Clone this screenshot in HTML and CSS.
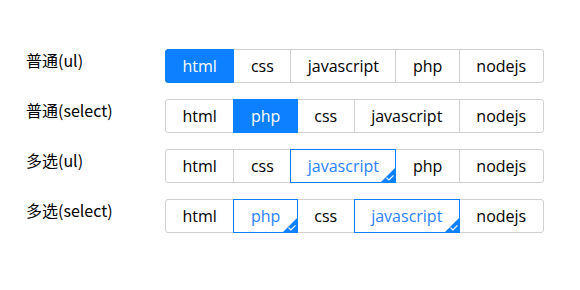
FILE: index.html
```html
<!DOCTYPE html>
<html>
<head>
<meta charset="utf-8">
<link rel="stylesheet" href="styles.css">
</head>
<body>
<div class="page">
  <div class="row">
    <div class="label">普通(ul)</div>
    <ul class="seg">
      <li class="item on">html</li>
      <li class="item">css</li>
      <li class="item">javascript</li>
      <li class="item">php</li>
      <li class="item">nodejs</li>
    </ul>
  </div>
  <div class="row">
    <div class="label">普通(select)</div>
    <ul class="seg">
      <li class="item">html</li>
      <li class="item on">php</li>
      <li class="item">css</li>
      <li class="item">javascript</li>
      <li class="item">nodejs</li>
    </ul>
  </div>
  <div class="row">
    <div class="label">多选(ul)</div>
    <ul class="seg">
      <li class="item">html</li>
      <li class="item">css</li>
      <li class="item check">javascript<svg class="tick" viewBox="0 0 14 14"><path d="M14 0V14H0Z" fill="#0c80ff"/><path d="M5.5 9.6l2.4 2.3 4.6-4.6" stroke="#fff" stroke-width="1.2" fill="none"/></svg></li>
      <li class="item">php</li>
      <li class="item">nodejs</li>
    </ul>
  </div>
  <div class="row">
    <div class="label">多选(select)</div>
    <ul class="seg">
      <li class="item">html</li>
      <li class="item check">php<svg class="tick" viewBox="0 0 14 14"><path d="M14 0V14H0Z" fill="#0c80ff"/><path d="M5.5 9.6l2.4 2.3 4.6-4.6" stroke="#fff" stroke-width="1.2" fill="none"/></svg></li>
      <li class="item">css</li>
      <li class="item check">javascript<svg class="tick" viewBox="0 0 14 14"><path d="M14 0V14H0Z" fill="#0c80ff"/><path d="M5.5 9.6l2.4 2.3 4.6-4.6" stroke="#fff" stroke-width="1.2" fill="none"/></svg></li>
      <li class="item">nodejs</li>
    </ul>
  </div>
</div>
</body>
</html>
```
FILE: styles.css
```css
html, body {
  margin: 0;
  padding: 0;
  background: #fff;
}
.page {
  padding: 49px 0 0 26px;
  display: flex;
  flex-direction: column;
  gap: 16px;
  font-family: "Open Sans", "Noto Sans CJK SC", sans-serif;
  color: #000;
}
.row {
  display: flex;
  align-items: flex-start;
}
.label {
  width: 139px;
  font-size: 16px;
  line-height: 22px;
  padding-top: 0;
  font-family: "Noto Sans CJK SC", sans-serif;
  color: #000;
}
.seg {
  list-style: none;
  margin: 0;
  padding: 0;
  display: flex;
}
.item {
  position: relative;
  height: 32px;
  line-height: 32px;
  padding: 0 16.5px;
  border: 1px solid #d0d0d0;
  margin-left: -1px;
  font-size: 16px;
  background: #fff;
  color: #000;
  white-space: nowrap;
}
.item:first-child {
  margin-left: 0;
  border-radius: 3px 0 0 3px;
}
.item:last-child {
  border-radius: 0 3px 3px 0;
}
.item.on {
  background: #0c80ff;
  border-color: #0c80ff;
  color: #fff;
  z-index: 1;
}
.item.check {
  border-color: #0c80ff;
  color: #2a82ff;
  z-index: 1;
}
.tick {
  position: absolute;
  right: 0;
  bottom: 0;
  width: 14px;
  height: 14px;
  display: block;
}
```
